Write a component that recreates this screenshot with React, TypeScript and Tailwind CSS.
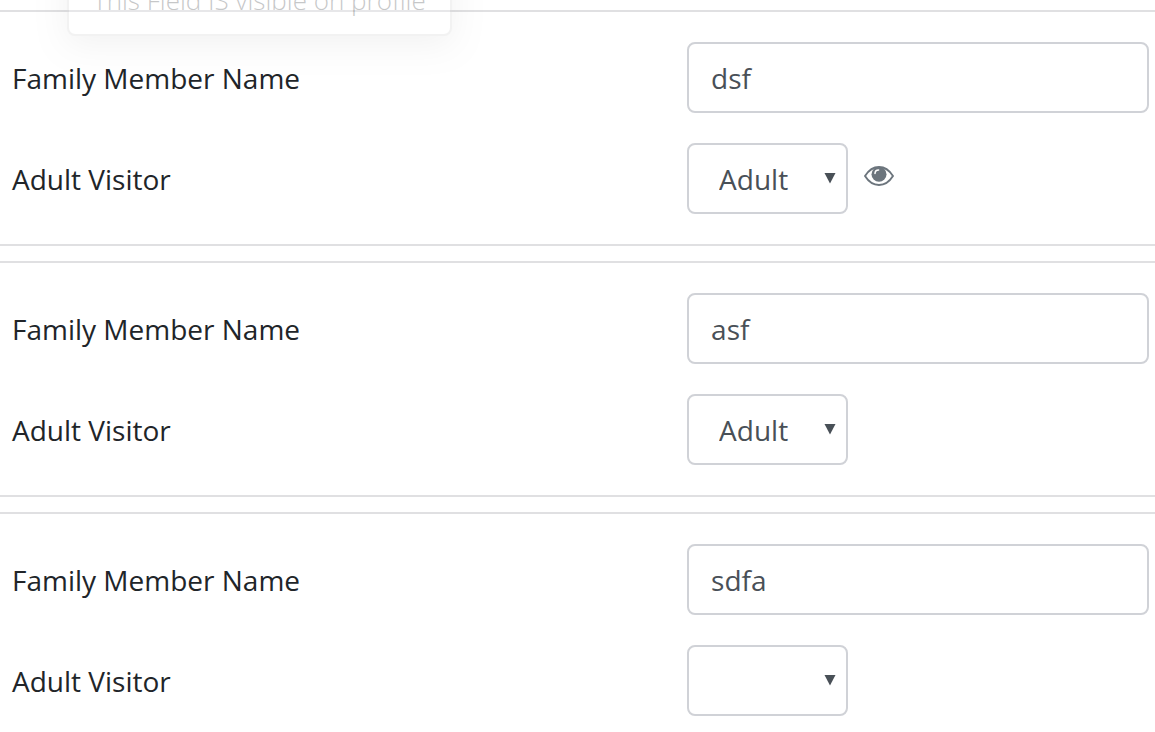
import { useState } from 'react'

type Member = {
  id: number
  name: string
  visitor: string
  showEye?: boolean
}

const initialMembers: Member[] = [
  { id: 1, name: 'dsf', visitor: 'Adult', showEye: true },
  { id: 2, name: 'asf', visitor: 'Adult' },
  { id: 3, name: 'sdfa', visitor: '' },
]

function EyeIcon() {
  return (
    <svg viewBox="0 0 30 20" className="w-[30px] h-5" fill="none" aria-hidden="true">
      <path
        d="M1 10C4.600 4.300 9.500 1 15 1s10.400 3.300 14 9c-3.600 5.700-8.500 9-14 9S4.600 15.700 1 10Z"
        stroke="#6c757d"
        strokeWidth="1.900"
        strokeLinejoin="round"
      />
      <circle cx="15" cy="8.200" r="7.500" fill="#6c757d" />
      <path d="M11 7.600c0-2.200 1.400-3.700 3.600-3.700" stroke="#fff" strokeWidth="1.500" strokeLinecap="round" />
    </svg>
  )
}

function MemberFields({ member, onChange }: { member: Member; onChange: (member: Member) => void }) {
  const nameId = `member-name-${member.id}`
  const visitorId = `member-visitor-${member.id}`

  return (
    <section className="border-y-2 border-[#e0e0e2] py-[30px] pl-3 pr-1.5 space-y-[30px]">
      <div className="grid grid-cols-[19fr_13fr] items-center">
        <label htmlFor={nameId}>Family Member Name</label>
        <input
          id={nameId}
          type="text"
          value={member.name}
          onChange={(e) => onChange({ ...member, name: e.target.value })}
          className="w-full min-w-0 h-[71px] px-[22px] bg-white border-2 border-[#d0d2d7] rounded-lg text-[#495057]"
        />
      </div>

      <div className="grid grid-cols-[19fr_13fr] items-center">
        <label htmlFor={visitorId}>Adult Visitor</label>
        <div className="flex items-center gap-4">
          <div className="relative">
            <select
              id={visitorId}
              value={member.visitor}
              onChange={(e) => onChange({ ...member, visitor: e.target.value })}
              className="block w-[161px] h-[71px] pl-[30px] pr-8 appearance-none bg-white border-2 border-[#d0d2d7] rounded-lg text-[#495057]"
            >
              <option value=""></option>
              <option value="Adult">Adult</option>
              <option value="Child">Child</option>
            </select>
            <svg
              viewBox="0 0 12 12"
              className="absolute right-3 top-[29px] size-3 pointer-events-none"
              aria-hidden="true"
            >
              <path d="M.5 1h11L6 11.500Z" fill="#495057" />
            </svg>
          </div>
          {member.showEye && (
            <button type="button" aria-label="Toggle profile visibility" className="pb-1.5">
              <EyeIcon />
            </button>
          )}
        </div>
      </div>
    </section>
  )
}

export default function App() {
  const [members, setMembers] = useState(initialMembers)

  const updateMember = (next: Member) => {
    setMembers(members.map((m) => (m.id === next.id ? next : m)))
  }

  return (
    <div className="relative h-screen overflow-hidden bg-white text-[#212529] text-[28px] font-['Open_Sans','Noto_Sans',sans-serif]">
      <form className="pt-2.5 space-y-[15px]">
        {members.map((member) => (
          <MemberFields key={member.id} member={member} onChange={updateMember} />
        ))}
      </form>

      {/* Popover fading out over the first row */}
      <div
        role="tooltip"
        className="absolute left-[67px] -top-10 h-[76px] px-6 pt-[22px] bg-white border-2 border-black/20 rounded-lg shadow-[0_8px_32px_rgba(0,0,0,0.2)] opacity-25 text-[26px] font-light leading-8 whitespace-nowrap"
      >
        This Field IS visible on profile
      </div>
    </div>
  )
}
